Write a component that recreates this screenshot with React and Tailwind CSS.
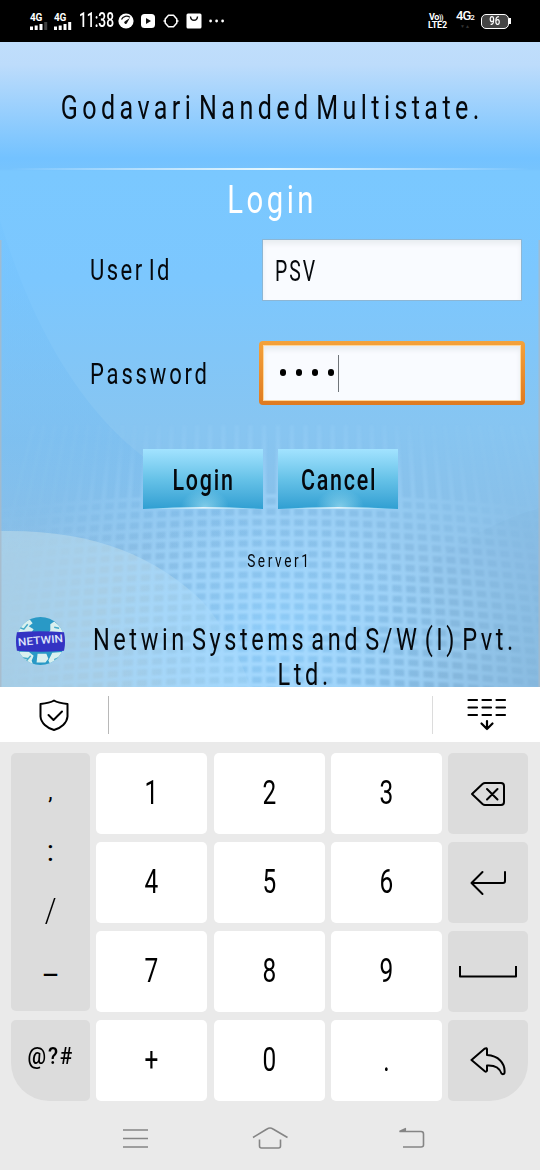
import React from "react";

const range = (n) => Array.from({ length: n }, (_, i) => i);

function StatusBar() {
  return (
    <header className="flex h-[42px] items-center bg-black pl-[29px] pr-[29px] font-[Roboto,sans-serif] text-white">
      <Signal faded />
      <Signal />
      <div className="w-[41px] pl-[2px] pt-px">
        <span className="inline-block origin-left scale-x-[0.69] whitespace-nowrap text-[20px] font-medium leading-5">11:38</span>
      </div>
      <svg className="h-4 w-4" viewBox="0 0 16 16">
        <circle cx="8" cy="8" r="7.6" fill="#fff" />
        <path d="M3.5 6.5C5 3 9 2.4 12 4.2" fill="none" stroke="#111" strokeWidth="1.3" />
        <path d="M11.8 5 7 8.2a1.4 1.4 0 1 0 2 1.7z" fill="#111" />
      </svg>
      <svg className="ml-[7px] h-[14px] w-[14px]" viewBox="0 0 14 14">
        <rect width="14" height="14" rx="3.5" fill="#fff" />
        <path d="M5 4v6l5-3z" fill="#111" />
      </svg>
      <svg className="ml-2 h-4 w-4" viewBox="0 0 16 16" fill="none" stroke="#fff" strokeWidth="1.5">
        <path d="M5.5 2.2h5L13.8 6v4l-3.3 3.8h-5L2.2 10V6z" strokeLinejoin="round" />
        <path d="M.5 8h2M13.500 8h2" />
      </svg>
      <svg className="ml-[7px] h-4 w-4" viewBox="0 0 16 16">
        <rect x=".5" y=".5" width="15" height="15" rx="1.5" fill="#fff" />
        <path d="M4.500 3.500c.3 5 6.700 5 7 0" fill="none" stroke="#111" strokeWidth="1.4" />
      </svg>
      <svg className="ml-[7px] h-4 w-4" viewBox="0 0 16 16" fill="#fff">
        <circle cx="1.600" cy="8" r="1.400" /><circle cx="7.600" cy="8" r="1.400" /><circle cx="13.600" cy="8" r="1.400" />
      </svg>
      <div className="ml-auto flex items-center">
        <div className="w-[24px] text-[9px] font-bold leading-[7px]">
          <div className="pl-px tracking-[-0.4px]">Vo<span className="text-[7px]">))</span></div>
          <div className="tracking-[-0.2px]">LTE2</div>
        </div>
        <div className="flex w-[26px] flex-col items-center">
          <div className="-mt-1 whitespace-nowrap text-[13px] font-medium leading-3 tracking-[-1px]">4G<span className="text-[8px]">2</span></div>
          <div className="h-1 text-[5px] leading-1 text-[#333]">▼▲</div>
        </div>
        <div className="ml-[3px] flex h-[15px] w-[28px] items-center justify-center rounded-[5px] border-[1.5px] border-white bg-[#444] text-[12px] font-medium leading-none">
          <span className="inline-block scale-x-[0.8]">96</span>
        </div>
        <div className="h-[6px] w-[2px] bg-white" />
      </div>
    </header>
  );
}

function Signal({ faded }) {
  return (
    <div className="flex w-6 flex-col items-start pl-px">
      <span className="text-[10px] font-bold leading-[9px] tracking-[-0.3px]">4G</span>
      <svg className="h-[8px] w-[19px]" viewBox="0 0 19 8" fill="#fff">
        <rect x="0" y="4.500" width="3" height="3.500" />
        <rect x="4.700" y="3.500" width="3" height="4.500" />
        <rect x="9.500" y="2" width="3" height="6" />
        <rect x="14.200" y="0" width="3" height="8" opacity={faded ? 0.25 : 1} />
      </svg>
    </div>
  );
}

function Backdrop() {
  return (
    <svg className="absolute inset-0 h-full w-full" viewBox="0 42 540 645" preserveAspectRatio="none">
      <defs>
        <linearGradient id="sky" x1="0" y1="0" x2="0" y2="1">
          <stop offset="0" stopColor="#c0defc" />
          <stop offset=".035" stopColor="#bddcfb" />
          <stop offset=".18" stopColor="#73c2ff" />
          <stop offset=".197" stopColor="#76c3fd" />
          <stop offset=".2" stopColor="#7ac8ff" />
          <stop offset=".37" stopColor="#7cc7fe" />
          <stop offset=".6" stopColor="#87c5f1" />
          <stop offset=".8" stopColor="#8abde4" />
          <stop offset="1" stopColor="#88b9de" />
        </linearGradient>
        <linearGradient id="leftBlue" x1="0" y1="0" x2="0" y2="1">
          <stop offset="0" stopColor="#60b8fc" stopOpacity=".1" />
          <stop offset=".65" stopColor="#68b4f0" stopOpacity=".28" />
          <stop offset="1" stopColor="#68b4f0" stopOpacity="0" />
        </linearGradient>
        <radialGradient id="glow">
          <stop offset="0" stopColor="#90d0fd" stopOpacity=".9" />
          <stop offset="1" stopColor="#8acbfa" stopOpacity="0" />
        </radialGradient>
        <radialGradient id="meshFade" gradientUnits="userSpaceOnUse" cx="280" cy="640" r="280" gradientTransform="translate(0 96) scale(1 .85)">
          <stop offset="0" stopColor="#fff" stopOpacity=".9" />
          <stop offset=".45" stopColor="#fff" stopOpacity=".65" />
          <stop offset="1" stopColor="#fff" stopOpacity=".05" />
        </radialGradient>
        <mask id="meshMask"><rect y="420" width="540" height="270" fill="url(#meshFade)" /></mask>
        <linearGradient id="shine"><stop offset="0" stopColor="#fff" stopOpacity="0" /><stop offset=".5" stopColor="#e5f8ff" /><stop offset="1" stopColor="#fff" stopOpacity="0" /></linearGradient>
        <filter id="soft"><feGaussianBlur stdDeviation=".9" /></filter>
      </defs>
      <rect y="42" width="540" height="645" fill="url(#sky)" />
      <path d="M0 220C30 320 75 400 135 450S270 540 340 560H0z" fill="url(#leftBlue)" />
      <path d="M540 508Q410 545 330 687H540z" fill="#7caed5" opacity=".15" />
      <path d="M0 531C90 529 155 555 203 602Q235 640 250 687H0z" fill="#b4d6e8" opacity=".7" />
      <ellipse cx="275" cy="640" rx="180" ry="140" fill="url(#glow)" />
      <g mask="url(#meshMask)" stroke="#a9dbff" fill="none" filter="url(#soft)">
        {range(41).map((i) => {
          const d = i - 20;
          const x = 278 + d * 14;
          const bend = d * Math.abs(d) * 0.09;
          return <path key={i} d={`M${x - bend} 425Q${x} 560 ${x + bend * 0.4} 690`} strokeWidth="4.500" />;
        })}
        {range(19).map((i) => {
          const y = 496 + i * 10.5;
          return <path key={i} d={`M0 ${y + 14}Q270 ${y - 14} 540 ${y + 14}`} strokeWidth="4.200" />;
        })}
      </g>
      <rect x="10" y="168" width="520" height="2" fill="url(#shine)" />
      <path d="M.75 240v447M539.250 240v447" stroke="#a8bac9" strokeWidth="1.500" opacity=".8" />
    </svg>
  );
}

function GlossButton({ children }) {
  return (
    <button className="relative h-[60px] w-[120px] bg-linear-to-b from-[#a2e3ff] via-[#66c2e8] to-[#2f9fd2]">
      <svg className="absolute inset-0 h-full w-full" viewBox="0 0 120 60">
        <defs>
          <radialGradient id="btnGlow"><stop offset="0" stopColor="#9adaf0" stopOpacity=".75" /><stop offset="1" stopColor="#9adaf0" stopOpacity="0" /></radialGradient>
          <linearGradient id="btnEdge"><stop offset=".1" stopColor="#fff" stopOpacity="0" /><stop offset=".5" stopColor="#fff" /><stop offset=".9" stopColor="#fff" stopOpacity="0" /></linearGradient>
        </defs>
        <ellipse cx="62" cy="58" rx="24" ry="18" fill="url(#btnGlow)" />
        <path d="M0 60Q60 56 120 60z" fill="#8fd0f2" />
        <path d="M0 60Q60 56.500 120 60Q60 59 0 60z" fill="url(#btnEdge)" />
      </svg>
      <span className="relative inline-block scale-x-[0.74] pl-[4px] pt-[4px] text-[29px] font-medium leading-none tracking-[2.4px]">{children}</span>
    </button>
  );
}

function Logo() {
  return (
    <svg className="mt-px ml-px h-[52px] w-[51px] shrink-0" viewBox="0 0 52 52">
      <defs><clipPath id="globe"><circle cx="26" cy="26" r="24.500" /></clipPath></defs>
      <g clipPath="url(#globe)">
        <rect width="52" height="52" fill="#2999c6" />
        <path d="M0 13l7-6 8-3 3 4-4 3 5 3-3 4H0zM36 9l4-3 12 10v4H33l3-5zM0 37h14l5 4-2 5 2 6H0zM38 38l14-1v15H37l-3-6zM23 39h9l2 5-3 4h-9z" fill="#d9f0ef" />
        <path d="M4 12l5 2 4-5M40 12l5 1M7 43l7 1M40 45l7-3M11 47l5-6" stroke="#46abc9" strokeWidth="1.500" fill="none" />
      </g>
      <path d="M2 17q24-2 48 0 2 10 0 19-24 2-48 0-2-10 0-19z" fill="#3433c3" />
      <text x="26" y="29" textAnchor="middle" fill="#dfe5fb" fontFamily="Roboto, sans-serif" fontWeight="500" fontSize="11" textLength="46" lengthAdjust="spacingAndGlyphs" transform="rotate(-5 26 26)">NETWIN</text>
    </svg>
  );
}

function LoginScreen() {
  return (
    <main className="relative h-[645px] font-[Roboto,sans-serif] text-[#05080c]">
      <Backdrop />
      <div className="relative flex h-full flex-col">
        <h1 className="flex h-[127px] items-center justify-center pl-[5px] pt-1">
          <span className="inline-block scale-x-[0.76] whitespace-nowrap text-[33px] leading-none tracking-[5.8px] [word-spacing:-9px]">Godavari Nanded Multistate.</span>
        </h1>
        <h2 className="flex h-[70px] justify-center pl-[4px] pt-[12px] text-white">
          <span className="inline-block scale-x-[0.77] text-[38px] leading-10 tracking-[4.500px]">Login</span>
        </h2>
        <label className="flex h-[62px] items-center pl-[90px]">
          <span className="w-[172px] pt-[5px]"><span className="inline-block origin-left scale-x-[0.76] whitespace-nowrap text-[29px] leading-none tracking-[3.200px] [word-spacing:-5px]">User Id</span></span>
          <span className="flex h-[62px] w-[260px] translate-y-px items-center border border-[#8db6d4] bg-[#f9fbff] pl-3 pt-[3px] shadow-[inset_0_4px_5px_#e9edf1]">
            <span className="inline-block origin-left scale-x-[0.67] text-[29px] leading-none tracking-[3px]">PSV</span>
          </span>
        </label>
        <label className="mt-10 flex h-[64px] items-center pl-[90px]">
          <span className="w-[169px] pt-[6px]"><span className="inline-block origin-left scale-x-[0.76] whitespace-nowrap text-[29px] leading-none tracking-[3.700px]">Password</span></span>
          <span className="h-[64px] w-[266px] translate-y-px rounded-[4px] bg-linear-to-b from-[#f4a23b] to-[#df7a20] p-1">
            <span className="flex h-full items-center border border-[#ffd79b] bg-[#f9fbff] pl-4 shadow-[inset_0_4px_5px_#e9edf1]">
              <span className="flex gap-[10px] pb-px">
                {range(4).map((i) => <i key={i} className="h-[7px] w-[6px] rounded-full bg-black" />)}
              </span>
              <span className="ml-1 h-[37px] w-px bg-[#70757a]" />
            </span>
          </span>
        </label>
        <div className="mt-[45px] flex gap-[15px] pl-[142.500px]">
          <GlossButton>Login</GlossButton>
          <GlossButton>Cancel</GlossButton>
        </div>
        <div className="mt-10 flex h-[22px] items-center justify-center pl-[18px] pt-[2px]">
          <span className="inline-block scale-x-[0.76] text-[18px] leading-none tracking-[3.400px]">Server1</span>
        </div>
        <footer className="mt-[43px] flex h-[73px] pl-[14px]">
          <Logo />
          <p className="-mt-px flex w-[477px] flex-col items-center text-[31px] leading-[35px] tracking-[4.700px] [word-spacing:-7px]">
            <span className="inline-block pt-[9px] scale-x-[0.76] whitespace-nowrap">Netwin Systems and S/W (I) Pvt.</span>
            <span className="inline-block scale-x-[0.76] whitespace-nowrap">Ltd.</span>
          </p>
        </footer>
      </div>
    </main>
  );
}

function SuggestionBar() {
  return (
    <div className="flex h-[55px] items-center bg-white">
      <div className="flex h-[38px] w-[109px] items-center justify-center border-r border-[#b8b8b8]">
        <svg className="h-[32px] w-[30px]" viewBox="0 0 30 32" fill="none" stroke="#000" strokeWidth="2" strokeLinejoin="round" strokeLinecap="round">
          <path d="M15 1.500C11 4 6 4.600 1.500 5v12.500C2 24 8 29 15 31c7-2 13-7 13.500-13.500V5C24 4.600 19 4 15 1.500z" />
          <path d="M9.500 16l5 5 8.500-8.500" />
        </svg>
      </div>
      <div className="h-[38px] w-[324px] border-r border-[#dcdcdc]" />
      <div className="flex flex-1 items-center justify-center">
        <svg className="mb-px h-[34px] w-10" viewBox="0 0 40 34" fill="none" stroke="#000" strokeWidth="2.200" strokeLinecap="round" strokeLinejoin="round">
          {[3, 10.500, 18].map((y) => <path key={y} d={`M1.500 ${y}h8.500M15.500 ${y}h8.500M29.500 ${y}h8.500`} />)}
          <path d="M20 24v8M14.500 26.500l5.500 5.500 5.500-5.500" />
        </svg>
      </div>
    </div>
  );
}

function Digit({ children }) {
  return (
    <button className="flex h-[81px] items-center justify-center rounded-[5px] bg-white pb-[2px]">
      <span className="inline-block scale-x-[0.74] text-[33px] leading-none">{children}</span>
    </button>
  );
}

function SideKey({ children, className = "" }) {
  return <button className={"flex h-[81px] items-center justify-center rounded-[5px] bg-[#dcdcdc] " + className}>{children}</button>;
}

const line = { fill: "none", stroke: "#000", strokeWidth: 2, strokeLinecap: "round", strokeLinejoin: "round" };

function Keyboard() {
  return (
    <section className="h-[428px] bg-[#eaeaea] pl-[11px] pt-[11px] font-[Roboto,sans-serif] text-black">
      <div className="grid grid-cols-[79px_111px_111px_111px_80px] gap-x-[6.250px] gap-y-[8px]">
        <div className="row-span-3 mb-px flex flex-col items-center rounded-[5px] bg-[#dcdcdc] pt-[22px] text-[30px] leading-[60px]">
          <span className="-mt-[13px] h-[60px] text-[22px]">,</span>
          <span className="-mt-px h-[60px]">:</span>
          <span className="h-[62px] scale-x-[0.9] text-[33px] font-light">/</span>
          <span className="-mt-[9px] h-[60px]">_</span>
        </div>
        <Digit>1</Digit><Digit>2</Digit><Digit>3</Digit>
        <SideKey>
          <svg className="h-[26px] w-9" viewBox="0 0 36 26" {...line}><path d="M2 13 12.500 3Q13.700 2 15 2H31q3 0 3 3v16q0 3-3 3H15q-1.300 0-2.500-1zM17 8l10.500 10.500M27.500 8 17 18.500" /></svg>
        </SideKey>
        <Digit>4</Digit><Digit>5</Digit><Digit>6</Digit>
        <SideKey>
          <svg className="h-[26px] w-9" viewBox="0 0 36 26" {...line}><path d="M12.500 2 1.500 13l11 11M2 13H33q2 0 2-2V2" /></svg>
        </SideKey>
        <Digit>7</Digit><Digit>8</Digit><Digit>9</Digit>
        <SideKey>
          <svg className="h-[12px] w-[58px]" viewBox="0 0 58 12" {...line} strokeLinecap="butt"><path d="M1 0v10.500H57V0" /></svg>
        </SideKey>
        <SideKey className="rounded-bl-[38px]">
          <span className="inline-block scale-x-[0.9] pb-[6px] pl-px text-[23px] font-medium tracking-[2px]">@?#</span>
        </SideKey>
        <Digit>+</Digit><Digit>0</Digit><Digit>.</Digit>
        <SideKey className="rounded-br-[38px]">
          <svg className="h-[30px] w-9" viewBox="0 0 36 30" {...line}><path d="M1.500 14 14.800 2.600Q17 1.500 17 3.500V9C28 9.500 35.500 17 34.500 27Q33.500 29 31.500 27.500C29.500 21.500 25 19 17 19.500V24.500Q16.500 26.500 14.500 25z" /></svg>
        </SideKey>
      </div>
      <nav className="-ml-[11px] flex h-[69px] items-center pl-[122px] pt-[5px]">
        <svg className="h-6 w-[27px]" viewBox="0 0 27 24" fill="none" stroke="#858585" strokeWidth="1.600"><path d="M1 4h25M1 12.500h25M1 21h25" /></svg>
        <svg className="ml-[103px] h-6 w-9" viewBox="0 0 36 24" fill="none" stroke="#858585" strokeWidth="1.600"><path d="M1 11.500 15 3Q18 1 21 3L35.500 11.500M7.500 13.500v6.500q0 2 2 2h17q2 0 2-2v-6.500" /></svg>
        <svg className="ml-[110px] h-6 w-[28px]" viewBox="0 0 28 24" fill="none" stroke="#858585" strokeWidth="1.600"><path d="M8 2.500 1.500 5.500H23q2.500 0 2.500 2.500v11q0 2-2.500 2H5" /><path d="M8 2.500 1.500 5.500H8z" fill="#858585" stroke="none" /></svg>
      </nav>
    </section>
  );
}

export default function App() {
  return (
    <div className="h-[1170px] w-[540px] overflow-hidden">
      <StatusBar />
      <LoginScreen />
      <SuggestionBar />
      <Keyboard />
    </div>
  );
}
